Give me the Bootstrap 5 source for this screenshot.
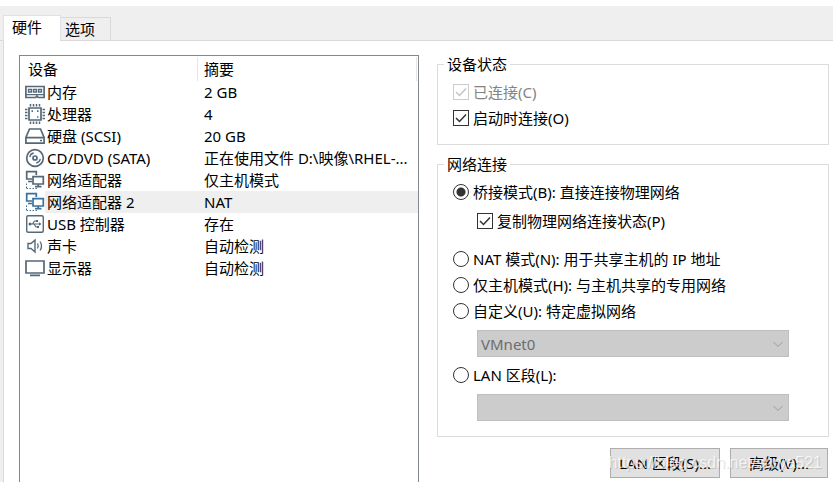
<!DOCTYPE html>
<html lang="zh-CN">
<head>
<meta charset="utf-8">
<meta name="viewport" content="width=device-width, initial-scale=1">
<title>虚拟机设置</title>
<link href="https://cdn.jsdelivr.net/npm/bootstrap@5.3.0/dist/css/bootstrap.min.css" rel="stylesheet">
<style>
  body { font: 15px/22px "Noto Sans", "Noto Sans CJK SC", sans-serif; color: #000; background: #efefef; }
  .top-strip { height: 6px; background: #fff; }
  .settings-tabs { padding: 9px 0 0 3px; border: 0; height: 35px; background: linear-gradient(#d9d9d9, #d9d9d9) bottom / 100% 1px no-repeat; }
  .settings-tabs .nav-link { margin: 0; border: 1px solid #d9d9d9; border-radius: 0; color: #000; padding: 0 15px 0 4px; height: 24px; background: #efefef; }
  .settings-tabs .nav-link.active { height: 26px; padding: 0 18px 0 8px; border-bottom: 0; background: #fff; color: #000; }
  .settings-tabs .nav-item { display: flex; align-items: flex-end; }
  .settings-tabs .nav-item + .nav-item .nav-link { border-left: 0; }
  .panel { display: grid; grid-template-columns: minmax(0, 400fr) minmax(0, 392fr); gap: 18px; margin-left: 3px; padding: 12px 4px 0 15px; border-left: 1px solid #d9d9d9; background: #fff; }
  .device-list { margin-top: 2px; border: 1px solid #828790; border-bottom: 0; }
  .device-table { table-layout: fixed; width: 100%; border-collapse: collapse; }
  .device-table th, .device-table td { padding: 0 0 0 6px; height: 22px; font-weight: 400; }
  .device-table th { height: 25px; background: linear-gradient(#e5e5e5, #e5e5e5) right 1px top 1px / 1px 24px no-repeat; }
  .device-table th:first-child { padding-left: 8px; background-position: right top 1px; }
  .device-table td:first-child { padding-left: 5px; }
  .name-col { width: 178px; }
  .dev-icon { flex: none; width: 20px; height: 20px; fill: none; stroke: #546878; stroke-width: 1.7; }
  .picked .dev-icon { stroke: #39709c; }
  .dev-name { padding-left: 2px; }
  .picked .dev-name, .picked td:last-child { background: #efefef; }
  .group-box { border: 1px solid #dcdcdc; padding: 4px 15px 13px; min-width: 0; }
  .group-box legend { float: none; width: auto; margin: 0 0 0 -9px; padding: 0 3px; font-size: 15px; line-height: 22px; }
  .net-box { margin-top: 8px; padding-bottom: 15px; }
  .opt { display: flex; align-items: center; gap: 4px; height: 26px; white-space: nowrap; }
  .opt .form-check-input { flex: none; margin: 0; width: 16px; height: 16px; border: 1px solid #333; background-color: #fff; }
  .opt .form-check-input[type=checkbox] { border-radius: 0; }
  .opt .form-check-input[type=checkbox]:checked { background: #fff url("data:image/svg+xml,%3Csvg xmlns='http://www.w3.org/2000/svg' viewBox='0 0 14 14'%3E%3Cpath d='M2 7l3.500 3.500L12 3.500' fill='none' stroke='%23333' stroke-width='1.500'/%3E%3C/svg%3E") center / 14px no-repeat; }
  .opt .form-check-input[type=radio]:checked { background: radial-gradient(circle, #333 4px, #fff 5px); }
  .opt .form-check-input:disabled, .opt .form-check-input:disabled ~ label { opacity: 1; color: #838383; }
  .opt .form-check-input:disabled { border-color: #ccc; }
  .opt .form-check-input[type=checkbox]:disabled { background-image: url("data:image/svg+xml,%3Csvg xmlns='http://www.w3.org/2000/svg' viewBox='0 0 14 14'%3E%3Cpath d='M2 7l3.500 3.500L12 3.500' fill='none' stroke='%23c4c4c4' stroke-width='1.500'/%3E%3C/svg%3E"); }
  .sub { margin: 3px 0 12px 24px; }
  .net-pick { margin: 6px 24px 5px; }
  .net-pick .form-select { height: 27px; padding: 0 24px 0 3px; border: 1px solid #bfbfbf; border-radius: 0; font-size: 15px; line-height: 22px; color: #6d6d6d; background: #ccc url("data:image/svg+xml,%3Csvg xmlns='http://www.w3.org/2000/svg' viewBox='0 0 10 10'%3E%3Cpath d='M.500 3L5 7.500 9.500 3' fill='none' stroke='%239b9b9b'/%3E%3C/svg%3E") right 5px center / 10px no-repeat; }
  .net-pick.last { margin-bottom: 0; }
  .actions { position: relative; margin-top: 11px; gap: 10px; padding: 0 1px 4px 0; }
  .actions .btn { height: 30px; padding: 0; border: 1px solid #adadad; border-radius: 0; background: #e1e1e1; color: #000; font-size: 15px; line-height: 22px; width: 98px; }
  .actions .btn:first-child { width: 110px; }
  .stamp { position: absolute; right: 7px; top: 4px; font: 16px/22px "Liberation Sans", sans-serif; color: rgba(255, 255, 255, .75); text-shadow: 1px 1px 1px rgba(0, 0, 0, .15); pointer-events: none; white-space: nowrap; }
</style>
<script src="https://cdn.jsdelivr.net/npm/bootstrap@5.3.0/dist/js/bootstrap.bundle.min.js" defer></script>
</head>
<body class="d-flex flex-column min-vh-100">
<div class="top-strip"></div>
<ul class="nav nav-tabs settings-tabs">
  <li class="nav-item"><a class="nav-link active" href="#hardware" aria-current="page">硬件</a></li>
  <li class="nav-item"><a class="nav-link" href="#options">选项</a></li>
</ul>
<main class="panel flex-grow-1" id="hardware">
  <section class="device-list">
    <table class="device-table">
      <colgroup><col class="name-col"><col></colgroup>
      <thead><tr><th scope="col">设备</th><th scope="col">摘要</th></tr></thead>
      <tbody>
        <tr><td><div class="d-flex align-items-center">
          <svg class="dev-icon" viewBox="0 0 20 20"><path d="M.9 4.500h18.200v11h-6l-1.200-1.600-1.200 1.600H.9z"/><path d="M3.500 7.500h3v2.500h-3zM8.500 7.500h3v2.500h-3zM13.500 7.500h3v2.500h-3zM1 12.700h18" stroke-width="1.300"/></svg>
          <span class="dev-name flex-grow-1">内存</span></div></td><td>2 GB</td></tr>
        <tr><td><div class="d-flex align-items-center">
          <svg class="dev-icon" viewBox="0 0 20 20"><path d="M4 4h12v12H4z"/><path d="M5.500 0v2.500m3-2.500v2.500m3-2.500v2.500m3-2.500v2.500M5.500 17.500V20m3-2.500V20m3-2.500V20m3-2.500V20M0 5.500h2.500M0 8.500h2.500M0 11.500h2.500M0 14.500h2.500M17.500 5.500H20m-2.500 3H20m-2.500 3H20m-2.500 3H20" stroke-width="1.500"/><path d="M6.500 7.200H8M12 7.200h1.500M12 13h1.500"/></svg>
          <span class="dev-name flex-grow-1">处理器</span></div></td><td>4</td></tr>
        <tr><td><div class="d-flex align-items-center">
          <svg class="dev-icon" viewBox="0 0 20 20"><path d="M4.500 3h11l3.600 8.500v5.700H.9v-5.700zM1 11.700h18M15 14.500h2"/></svg>
          <span class="dev-name flex-grow-1">硬盘 (SCSI)</span></div></td><td>20 GB</td></tr>
        <tr><td><div class="d-flex align-items-center">
          <svg class="dev-icon" viewBox="0 0 20 20"><circle cx="10" cy="10" r="8.300"/><circle cx="10" cy="10" r="2"/><path d="M4.700 9.200a5.200 5.200 0 0 1 4-4.200M15.300 10.800a5.200 5.200 0 0 1-4 4.200" stroke-width="1.300"/></svg>
          <span class="dev-name flex-grow-1">CD/DVD (SATA)</span></div></td><td class="text-truncate">正在使用文件 D:\映像\RHEL-...</td></tr>
        <tr><td><div class="d-flex align-items-center">
          <svg class="dev-icon" viewBox="0 0 20 20"><path d="M7 9H1.700V1.700h9.600V5M8 6.700h10.300V14H8zM10 16.700h6.500M13.200 14v2.500M3 11.500h4"/><path d="M1.500 13.500v5M1.500 18.500H13" stroke-dasharray="1.500 1.500" stroke-width="1"/></svg>
          <span class="dev-name flex-grow-1">网络适配器</span></div></td><td>仅主机模式</td></tr>
        <tr class="picked"><td><div class="d-flex align-items-center">
          <svg class="dev-icon" viewBox="0 0 20 20"><path d="M7 9H1.700V1.700h9.600V5M8 6.700h10.300V14H8zM10 16.700h6.500M13.200 14v2.500M3 11.500h4"/><path d="M1.500 13.500v5M1.500 18.500H13" stroke-dasharray="1.500 1.500" stroke-width="1"/></svg>
          <span class="dev-name flex-grow-1">网络适配器 2</span></div></td><td>NAT</td></tr>
        <tr><td><div class="d-flex align-items-center">
          <svg class="dev-icon" viewBox="0 0 20 20"><rect x="1.700" y="1.700" width="16.600" height="16.600" rx="1.500" stroke-width="1.400"/><path d="M4.500 10h10M7.500 10l2-3h2M9 10l2 3h1.500" stroke-width="1.200"/><path d="M14 8.300l2.500 1.700-2.500 1.700z" fill="#546878" stroke="none"/><circle cx="5" cy="10" r="1.500" fill="#546878" stroke="none"/><path d="M11 6h2v2h-2zM12 12h2v2h-2z" fill="#546878" stroke="none"/></svg>
          <span class="dev-name flex-grow-1">USB 控制器</span></div></td><td>存在</td></tr>
        <tr><td><div class="d-flex align-items-center">
          <svg class="dev-icon" viewBox="0 0 20 20"><path d="M3 7.500h3l4-3.500v12l-4-3.500H3z" stroke-width="1.400"/><path d="M12.500 7.500q1.500 2.500 0 5M15 5.500q3 4.500 0 9" stroke-width="1.300"/></svg>
          <span class="dev-name flex-grow-1">声卡</span></div></td><td>自动检测</td></tr>
        <tr><td><div class="d-flex align-items-center">
          <svg class="dev-icon" viewBox="0 0 20 20"><path d="M1 3h18v12H1zM5 17.300h10"/></svg>
          <span class="dev-name flex-grow-1">显示器</span></div></td><td>自动检测</td></tr>
      </tbody>
    </table>
  </section>
  <section>
    <fieldset class="group-box">
      <legend>设备状态</legend>
      <div class="opt"><input class="form-check-input" type="checkbox" id="connected" checked disabled><label for="connected">已连接(C)</label></div>
      <div class="opt"><input class="form-check-input" type="checkbox" id="power-on" checked><label for="power-on">启动时连接(O)</label></div>
    </fieldset>
    <fieldset class="group-box net-box">
      <legend>网络连接</legend>
      <div class="opt"><input class="form-check-input" type="radio" name="net" id="bridged" checked><label for="bridged">桥接模式(B): 直接连接物理网络</label></div>
      <div class="opt sub"><input class="form-check-input" type="checkbox" id="replicate" checked><label for="replicate">复制物理网络连接状态(P)</label></div>
      <div class="opt"><input class="form-check-input" type="radio" name="net" id="nat"><label for="nat">NAT 模式(N): 用于共享主机的 IP 地址</label></div>
      <div class="opt"><input class="form-check-input" type="radio" name="net" id="host-only"><label for="host-only">仅主机模式(H): 与主机共享的专用网络</label></div>
      <div class="opt"><input class="form-check-input" type="radio" name="net" id="custom"><label for="custom" id="custom-label">自定义(U): 特定虚拟网络</label></div>
      <div class="net-pick"><select class="form-select" aria-labelledby="custom-label" disabled><option>VMnet0</option></select></div>
      <div class="opt"><input class="form-check-input" type="radio" name="net" id="lan"><label for="lan" id="lan-label">LAN 区段(L):</label></div>
      <div class="net-pick last"><select class="form-select" aria-labelledby="lan-label" disabled><option></option></select></div>
    </fieldset>
    <div class="actions d-flex justify-content-end">
      <button type="button" class="btn">LAN 区段(S)...</button>
      <button type="button" class="btn">高级(V)...</button>
      <span class="stamp">https://blog.csdn.net/surya521</span>
    </div>
  </section>
</main>
</body>
</html>
